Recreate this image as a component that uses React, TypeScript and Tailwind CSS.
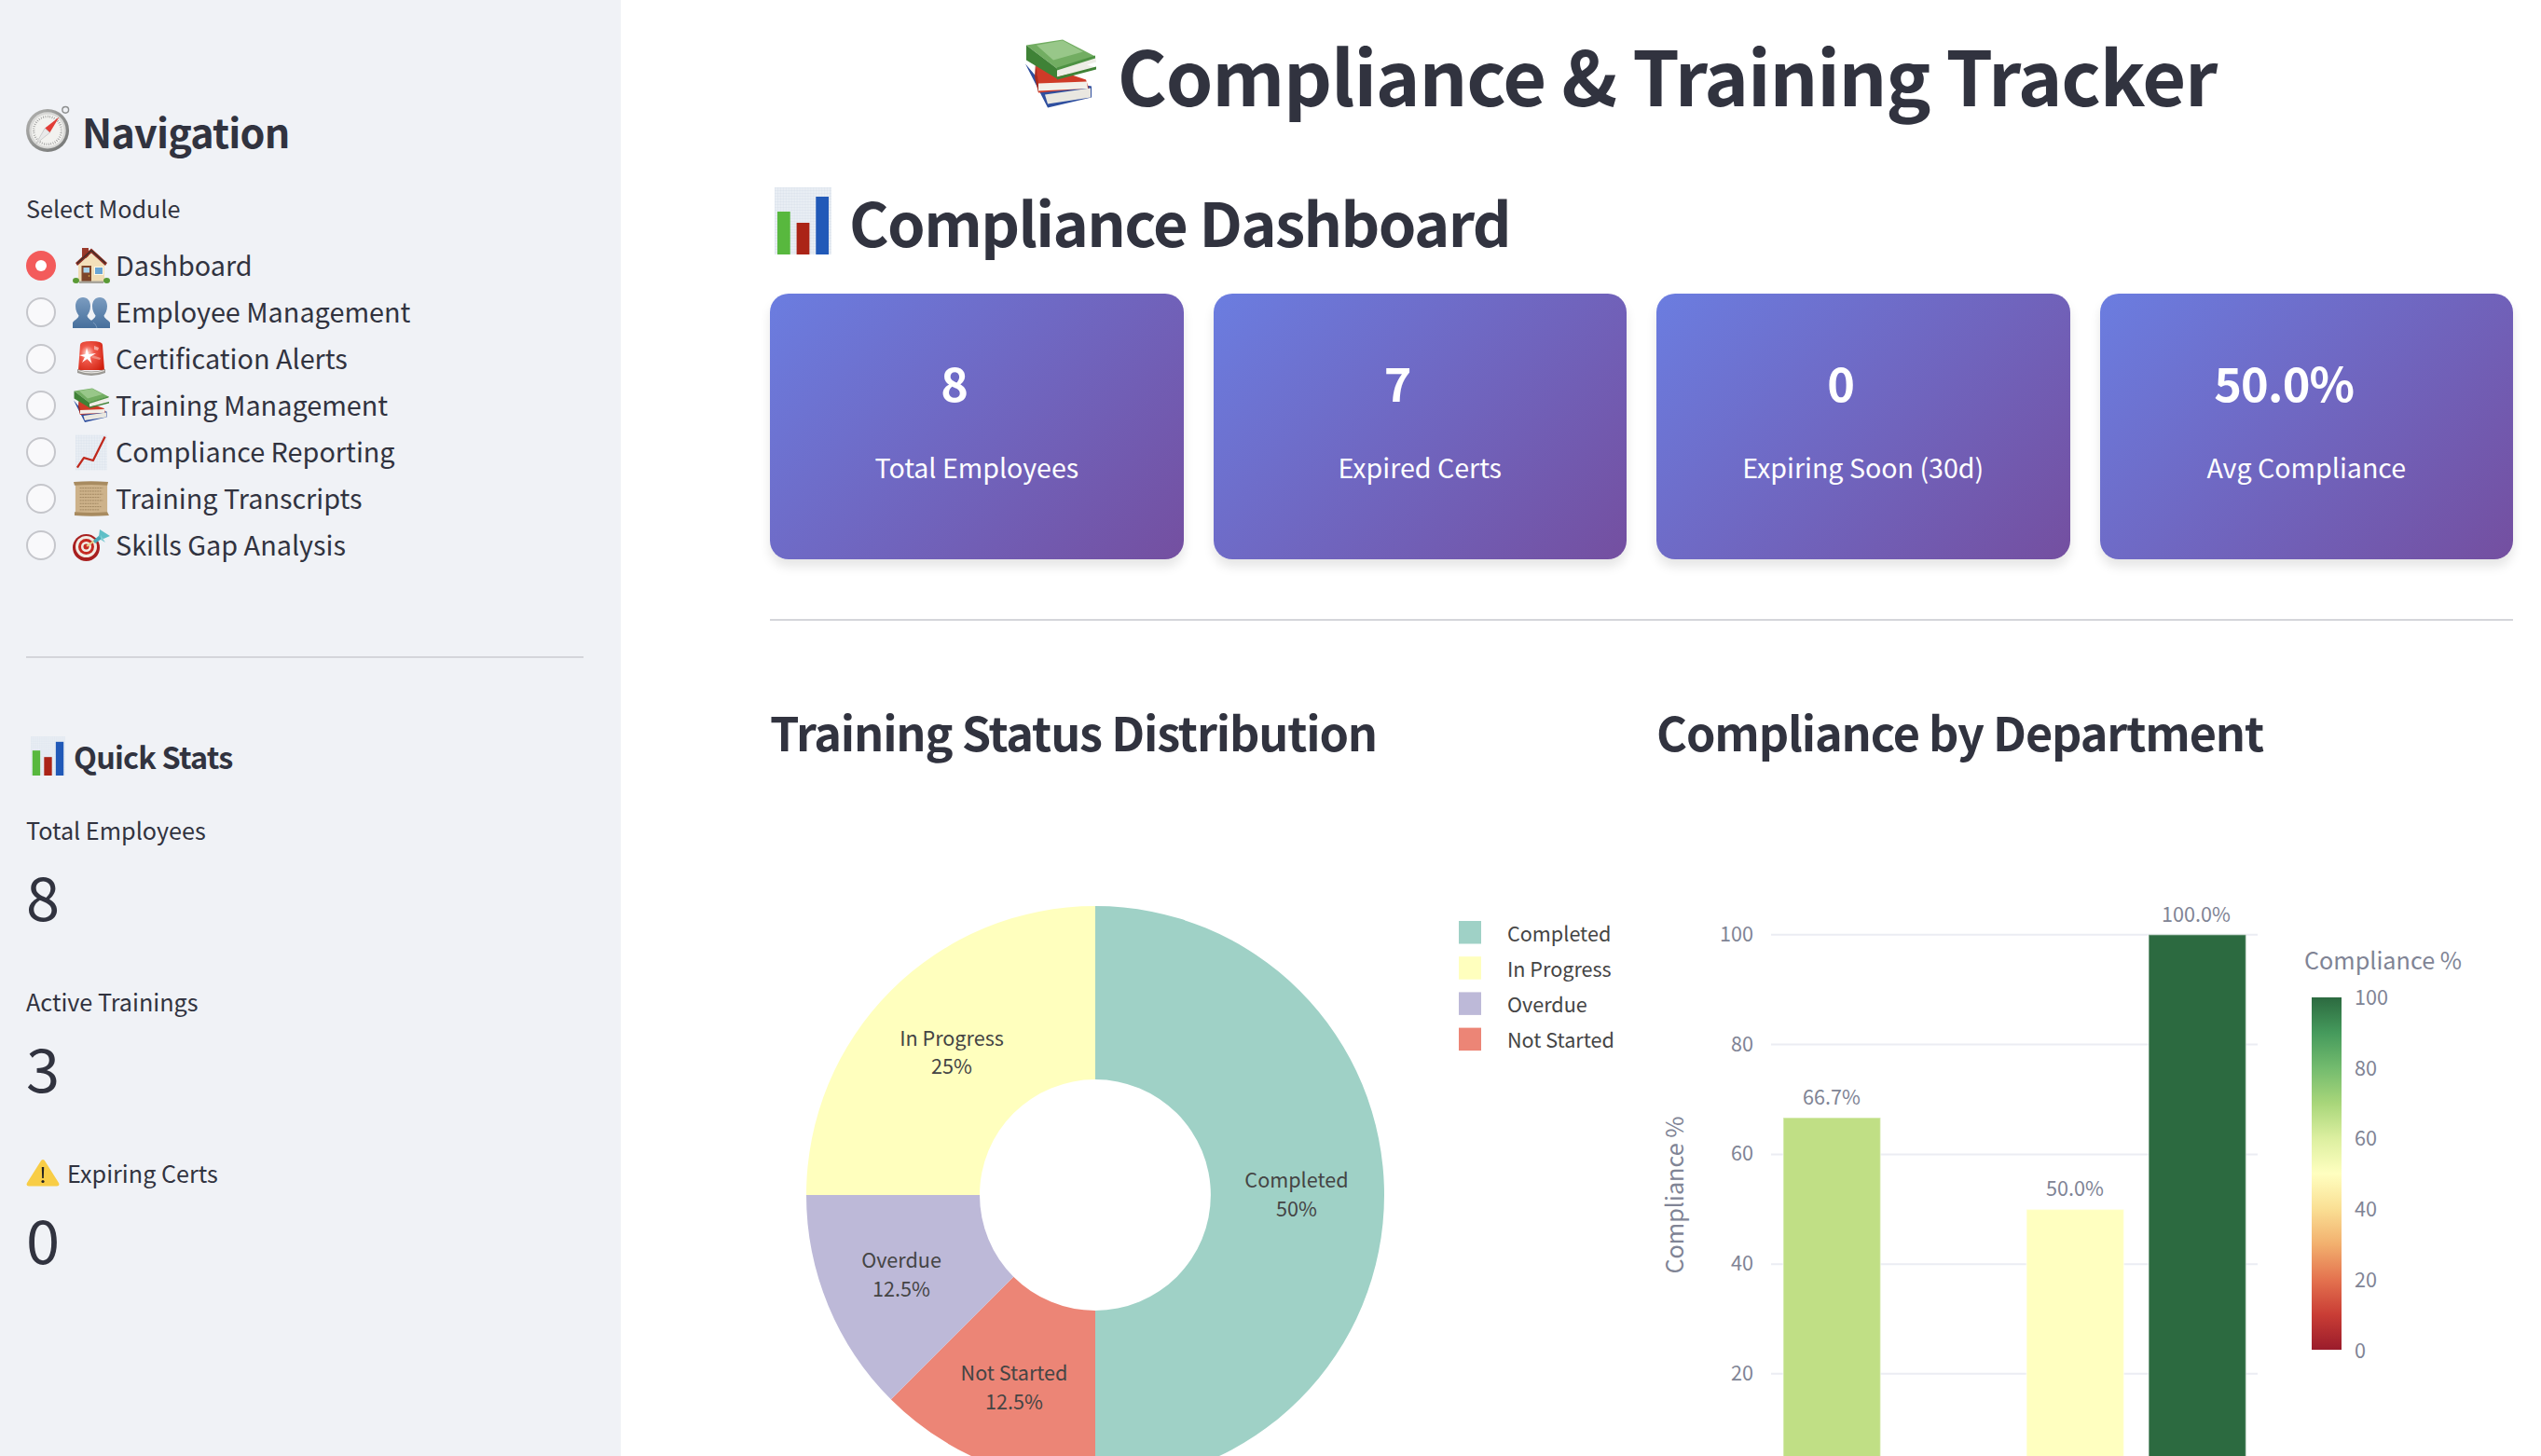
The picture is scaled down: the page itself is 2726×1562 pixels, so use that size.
import React from "react";

const Grid = ({ id }: { id: string }) => (
  <defs>
    <pattern id={id} width="3" height="3" patternUnits="userSpaceOnUse">
      <rect width="3" height="3" fill="#e9eef4" />
      <path d="M3 0H0V3" fill="none" stroke="#cdd8e5" strokeWidth="0.5" />
    </pattern>
  </defs>
);

const BarChartEmoji = ({ className }: { className: string }) => (
  <svg viewBox="0 0 62 72" className={className} preserveAspectRatio="none">
    <Grid id="g1" />
    <rect width="62" height="72" fill="url(#g1)" />
    <rect x="3" y="26" width="14" height="46" fill="#58b83e" />
    <rect x="24" y="38" width="14" height="34" fill="#ab2417" />
    <rect x="45" y="10" width="14" height="62" fill="#2159b8" />
  </svg>
);

const BooksEmoji = ({ className }: { className: string }) => (
  <svg viewBox="0 0 76 74" className={className}>
    <path d="M0 26 L24 73 L71 62 L71 50 L12 40 Z" fill="#2f4f9f" />
    <path d="M21 59 L70 52 L70 62 L24 69 Z" fill="#e9e7e0" />
    <path d="M11 25 L65 43 L68 52 L14 57 Z" fill="#cf3b28" />
    <path d="M14 47 L66 45 L67 52.500 L14 55 Z" fill="#f2f0ea" />
    <path d="M11 25 L14 47 L14 57 L10 40 Z" fill="#a92a1c" />
    <path d="M1 6 L40 0 L75 18 L34 31 Z" fill="#72ad62" />
    <path d="M12 6 L40 1 L62 13 L30 22 Z" fill="#98c789" />
    <path d="M1 6 L34 31 L34 42 L1 22 Z" fill="#3f8236" />
    <path d="M34 31 L75 18 L76 24 L66 27 L76 30 L34 40 Z" fill="#eeede6" />
    <path d="M34 30 L75 17 L75 20 L34 33 Z" fill="#4d9243" />
    <path d="M34 40 L76 29 L76 32 L34 43 Z" fill="#3f8236" />
  </svg>
);

const CompassEmoji = ({ className }: { className: string }) => (
  <svg viewBox="0 0 50 52" className={className}>
    <defs>
      <linearGradient id="rim" x1="0" y1="0" x2="1" y2="1">
        <stop offset="0" stopColor="#b5b5b3" />
        <stop offset="1" stopColor="#6f7170" />
      </linearGradient>
    </defs>
    <circle cx="44" cy="5" r="3.500" fill="none" stroke="#8d8f8f" strokeWidth="1.500" />
    <circle cx="24" cy="28" r="24" fill="url(#rim)" />
    <circle cx="24" cy="28" r="20.500" fill="#d8d8d6" />
    <circle cx="24" cy="28" r="18" fill="#f2f2ef" />
    <circle cx="24" cy="28" r="15.500" fill="none" stroke="#8e8e8e" strokeWidth="2.500" strokeDasharray="0.7 1.800" />
    <path d="M37 13 L21 25.500 L26.500 30.500 Z" fill="#e23d36" />
    <path d="M11 43 L21 25.500 L26.500 30.500 Z" fill="#e9e9e9" stroke="#a8a8a8" strokeWidth="0.5" />
  </svg>
);

const HouseEmoji = () => (
  <svg viewBox="0 0 40 38" className="h-[38px] w-[40px]">
    <rect x="10" y="0" width="7" height="11" fill="#9a3a2c" />
    <rect x="6" y="17" width="28" height="19" fill="#f0dcb4" />
    <path d="M20 6 L34 18 V24 H6 V18 Z" fill="#f3e0ba" />
    <path d="M20 0.500 L37 16 L35 19 L20 5.500 L5 19 L3 16 Z" fill="#8f2f22" />
    <path d="M20 2 L35.500 16 L35 17 L20 3.500 L5 17 L4.500 16 Z" fill="#33302d" />
    <rect x="9.500" y="19" width="10.500" height="17" fill="#7e4529" />
    <rect x="11.500" y="21" width="6.500" height="5.500" fill="#a9d3ea" />
    <circle cx="17.500" cy="30" r="0.800" fill="#e6c04f" />
    <rect x="23" y="20" width="10" height="9" fill="#fff8e6" />
    <rect x="24" y="21" width="8" height="7" fill="#6aa5d3" />
    <rect x="7" y="35.500" width="26" height="2.500" fill="#a8a59c" />
    <ellipse cx="3.500" cy="35" rx="3.500" ry="3" fill="#5a9a35" />
    <ellipse cx="36.500" cy="35" rx="3.500" ry="3" fill="#5a9a35" />
  </svg>
);

const BustsEmoji = () => (
  <svg viewBox="0 0 40 33" className="h-[33px] w-[40px]">
    <defs>
      <linearGradient id="bust" x1="0" y1="0" x2="0" y2="1">
        <stop offset="0" stopColor="#7b9cc0" />
        <stop offset="1" stopColor="#466f9c" />
      </linearGradient>
    </defs>
    <g fill="url(#bust)">
      <path d="M29 0 C34 0 37 4 37 9.500 C37 14 35 17.500 33.500 19.500 C34 23 38 24 40 27 V33 H18 V27 C20 24 24 23 24.500 19.500 C23 17.500 21 14 21 9.500 C21 4 24 0 29 0 Z" />
      <path d="M11 0 C16 0 19 4 19 9.500 C19 14 17 17.500 15.500 19.500 C16 23 20 24 22 27 V33 H0 V27 C2 24 6 23 6.500 19.500 C5 17.500 3 14 3 9.500 C3 4 6 0 11 0 Z" />
    </g>
    <path d="M22 27 C24 28 25 30 26 33" stroke="#a9c1da" strokeWidth="0.5" fill="none" />
  </svg>
);

const SirenEmoji = () => (
  <svg viewBox="0 0 30 39" className="h-[39px] w-[30px]">
    <defs>
      <radialGradient id="flare" cx="0.35" cy="0.42" r="0.75">
        <stop offset="0" stopColor="#ffe6df" />
        <stop offset="0.35" stopColor="#f0594a" />
        <stop offset="1" stopColor="#d0200f" />
      </radialGradient>
    </defs>
    <path d="M3 4 Q3 0 15 0 Q27 0 27 4 L29 31 H1 Z" fill="url(#flare)" />
    <path d="M0 30 Q15 35 30 30 V34 Q15 40 0 34 Z" fill="#9b9994" />
    <path d="M1 31 Q15 35.500 29 31 V32 Q15 37 1 32 Z" fill="#e7e5e0" />
    <path d="M10 7 L12 14 L20 13 L13.500 17 L15.500 24 L10.500 19 L5 23 L8 17 L2 15 L8.500 14 Z" fill="#fff" />
    <path d="M18 5 L23 7 L22 10 L18 9 Z" fill="#f5a79d" />
    <path d="M16 15 L25 18 L24 20 L16 18 Z" fill="#f08a7d" />
  </svg>
);

const ChartUpEmoji = () => (
  <svg viewBox="0 0 36 40" className="h-[39px] w-[34px]">
    <Grid id="g2" />
    <rect width="36" height="40" fill="url(#g2)" />
    <path d="M2 37 L9.500 26 L20 29 L33.500 2" fill="none" stroke="#c0281c" strokeWidth="2.400" strokeLinejoin="round" />
  </svg>
);

const ScrollEmoji = () => (
  <svg viewBox="0 0 40 40" className="h-[40px] w-[38px]">
    <rect x="2" y="2" width="36" height="36" fill="#cdb28a" />
    <path d="M0 1 Q20 -0.500 39 1 L38 5 Q20 3.500 1 5 Z" fill="#a88b60" />
    <path d="M1 35 Q20 36.500 38 35 L40 39 Q20 40.500 1 39 Z" fill="#a88b60" />
    <path d="M7 8H33M7 11.500H31M7 15H33M7 18.500H30M7 22H33M7 25.500H28M7 29H31M7 32.500H29" stroke="#a08660" strokeWidth="1" strokeDasharray="2 0.800" />
  </svg>
);

const DartEmoji = () => (
  <svg viewBox="0 0 40 34" className="h-[34px] w-[40px]">
    <circle cx="14.500" cy="19.500" r="14.500" fill="#a81f1f" />
    <circle cx="14.500" cy="18.500" r="11.500" fill="#f1ece4" />
    <circle cx="14.500" cy="18.500" r="8.500" fill="#c52a22" />
    <circle cx="14.500" cy="18.500" r="5.500" fill="#f1ece4" />
    <circle cx="14.500" cy="18.500" r="3" fill="#c52a22" />
    <path d="M15 18 L25 11" stroke="#e6d28a" strokeWidth="2" />
    <path d="M22 12 L29 6 L31 10 L24 15 Z" fill="#49a8b8" />
    <path d="M29 0 L40 7 L33 10 L28 8 Z" fill="#5fbfc7" />
    <path d="M30 6 L35 14 L30 11 Z" fill="#7fcdd3" />
  </svg>
);

const WarningEmoji = () => (
  <svg viewBox="0 0 36 30" className="h-[30px] w-[36px]">
    <path d="M18 1 Q19.500 1 20.500 3 L35 26 Q36.500 29.500 33 29.500 H3 Q-0.500 29.500 1 26 L15.500 3 Q16.500 1 18 1 Z" fill="#f8cd46" />
    <path d="M16.800 9 H19.200 L18.800 21 H17.200 Z" fill="#222" />
    <circle cx="18" cy="24.500" r="1.600" fill="#222" />
  </svg>
);

const modules: [string, React.ReactNode][] = [
  ["Dashboard", <HouseEmoji />],
  ["Employee Management", <BustsEmoji />],
  ["Certification Alerts", <SirenEmoji />],
  ["Training Management", <BooksEmoji className="h-[40px] w-[38px]" />],
  ["Compliance Reporting", <ChartUpEmoji />],
  ["Training Transcripts", <ScrollEmoji />],
  ["Skills Gap Analysis", <DartEmoji />],
];

const stats: [React.ReactNode, string][] = [
  ["Total Employees", "8"],
  ["Active Trainings", "3"],
  [
    <span className="flex items-center gap-[8px]">
      <WarningEmoji />
      <span>Expiring Certs</span>
    </span>,
    "0",
  ],
];

const cards = [
  ["8", "Total Employees"],
  ["7", "Expired Certs"],
  ["0", "Expiring Soon (30d)"],
  ["50.0%", "Avg Compliance"],
];

function Sidebar() {
  return (
    <aside className="h-full w-[666px] shrink-0 bg-[#f0f2f6] pl-[28px] pr-[40px] pt-[110px]">
      <div className="flex h-[60px] items-center gap-[12px] text-[43px] font-semibold leading-[60px] tracking-[-0.8px]">
        <CompassEmoji className="h-[50px] w-[48px] -translate-y-[2px]" />
        <span>Navigation</span>
      </div>
      <div className="mt-[33px] h-[40px] text-[25.2px] leading-[40px]">Select Module</div>
      <div className="mt-[17px]">
        {modules.map(([name, icon], i) => (
          <div key={name} className="flex h-[50px] items-center">
            {i === 0 ? (
              <div className="flex size-[32px] items-center justify-center rounded-full bg-[#f35b5b]">
                <div className="size-[12px] rounded-full bg-white" />
              </div>
            ) : (
              <div className="size-[32px] rounded-full border-2 border-[#c5c6cb] bg-[#f9f9fb]" />
            )}
            <div className="ml-[18px] flex w-[40px] justify-center">{icon}</div>
            <span className="ml-[6px] pb-[2px] text-[28.8px] leading-[48px]">{name}</span>
          </div>
        ))}
      </div>
      <div className="mt-[94px] h-[2px] bg-[#d4d5da]" />
      <div className="mt-[75px] flex h-[60px] items-center gap-[9px] pl-[5px] text-[32.4px] font-semibold leading-[60px] tracking-[-0.8px]">
        <BarChartEmoji className="h-[42px] w-[37px]" />
        <span>Quick Stats</span>
      </div>
      <div className="mt-[29px]">
        {stats.map(([label, value], i) => (
          <div key={i} className="mb-[54px]">
            <div className="h-[40px] text-[25.2px] leading-[40px]">{label}</div>
            <div className="mt-[10px] h-[80px] text-[65px] leading-[80px]">{value}</div>
          </div>
        ))}
      </div>
    </aside>
  );
}

function Donut() {
  const labels: [number, number, number, string, string][] = [
    [1021, 1115, 1145, "In Progress", "25%"],
    [1391, 1267, 1298, "Completed", "50%"],
    [967, 1353, 1384, "Overdue", "12.5%"],
    [1088, 1474, 1505, "Not Started", "12.5%"],
  ];
  const legend: [string, string][] = [
    ["Completed", "#9fd1c6"],
    ["In Progress", "#ffffbe"],
    ["Overdue", "#bdb9d8"],
    ["Not Started", "#ec8576"],
  ];
  return (
    <svg viewBox="826 930 919 640" className="block h-[640px] w-[919px] overflow-hidden">
      <path d="M1175 972 A310 310 0 0 1 1175 1592 L1175 1406 A124 124 0 0 0 1175 1158 Z" fill="#9fd1c6" />
      <path d="M1175 1592 A310 310 0 0 1 955.8 1501.2 L1087.3 1369.7 A124 124 0 0 0 1175 1406 Z" fill="#ec8576" />
      <path d="M955.8 1501.2 A310 310 0 0 1 865 1282 L1051 1282 A124 124 0 0 0 1087.3 1369.7 Z" fill="#bdb9d8" />
      <path d="M865 1282 A310 310 0 0 1 1175 972 L1175 1158 A124 124 0 0 0 1051 1282 Z" fill="#ffffbe" />
      {labels.map(([x, y1, y2, a, b]) => (
        <g key={a} textAnchor="middle" fontSize="21.6" fill="#444444">
          <text x={x} y={y1 + 6.5}>{a}</text>
          <text x={x} y={y2 + 6.5}>{b}</text>
        </g>
      ))}
      {legend.map(([name, color], i) => (
        <g key={name}>
          <rect x="1565" y={988 + i * 38.2} width="24" height="24.500" fill={color} />
          <text x="1617" y={1009.5 + i * 38.2} fontSize="21.6" fill="#444444">{name}</text>
        </g>
      ))}
    </svg>
  );
}

function Bars() {
  const ticks: [number, string][] = [
    [1002.7, "100"],
    [1120.6, "80"],
    [1238.4, "60"],
    [1356.3, "40"],
    [1473.8, "20"],
  ];
  const scale: [number, string][] = [
    [1071, "100"],
    [1147, "80"],
    [1222, "60"],
    [1298, "40"],
    [1374, "20"],
    [1450, "0"],
  ];
  const bars: [number, number, string, string, number, number][] = [
    [1913, 1199, "#c0df85", "66.7%", 1965, 1178],
    [2174, 1297.4, "#ffffc0", "50.0%", 2226, 1276],
    [2305, 1002.7, "#2c6a40", "100.0%", 2356, 982],
  ];
  return (
    <svg viewBox="1777 930 919 640" className="block h-[640px] w-[919px] overflow-hidden">
      <defs>
        <linearGradient id="rdylgn" x1="0" y1="1" x2="0" y2="0">
          <stop offset="0" stopColor="#9a1c2b" />
          <stop offset="0.1" stopColor="#c93d35" />
          <stop offset="0.2" stopColor="#e4734f" />
          <stop offset="0.3" stopColor="#f2b06e" />
          <stop offset="0.4" stopColor="#fadf94" />
          <stop offset="0.5" stopColor="#ffffc0" />
          <stop offset="0.6" stopColor="#dcefa0" />
          <stop offset="0.7" stopColor="#a8d67a" />
          <stop offset="0.8" stopColor="#73bb6e" />
          <stop offset="0.9" stopColor="#459a5c" />
          <stop offset="1" stopColor="#2c6a40" />
        </linearGradient>
      </defs>
      {ticks.map(([y, t]) => (
        <g key={t}>
          <line x1="1900" x2="2422" y1={y} y2={y} stroke="#ebedf3" strokeWidth="2" />
          <text x="1881" y={y + 7} textAnchor="end" fontSize="21.6" fill="#808495">{t}</text>
        </g>
      ))}
      {bars.map(([x, y, color, label, lx, ly]) => (
        <g key={label}>
          <rect x={x} y={y} width="104.500" height={1591 - y} fill={color} stroke="#ffffff" strokeOpacity="0.45" strokeWidth="1.500" />
          <text x={lx} y={ly + 7} textAnchor="middle" fontSize="21.6" fill="#808495">{label}</text>
        </g>
      ))}
      <text transform="translate(1806 1282) rotate(-90)" textAnchor="middle" fontSize="25.2" fill="#808495">Compliance %</text>
      <text x="2472" y="1040" fontSize="25.2" fill="#808495">Compliance %</text>
      <rect x="2480" y="1070" width="32" height="378" fill="url(#rdylgn)" />
      {scale.map(([y, t]) => (
        <text key={t} x="2526" y={y + 7} fontSize="21.6" fill="#808495">{t}</text>
      ))}
    </svg>
  );
}

export default function App() {
  return (
    <div className="flex h-[1562px] w-[2726px] overflow-hidden bg-white font-['Noto_Sans_CJK_SC','Noto_Sans',sans-serif] text-[#31333f]">
      <Sidebar />
      <main className="h-full w-[2060px] pl-[160px] pr-[30px] pt-[29px]">
        <div className="flex h-[100px] items-center justify-center gap-[23px] pr-[44px] text-[81px] font-bold leading-[100px] tracking-[-1.2px]">
          <BooksEmoji className="h-[75px] w-[76px]" />
          <span>Compliance &amp; Training Tracker</span>
        </div>
        <div className="mt-[63px] flex h-[90px] items-center gap-[19px] pl-[5px] text-[65px] font-semibold leading-[90px] tracking-[-1.6px]">
          <BarChartEmoji className="h-[72px] w-[61px]" />
          <span>Compliance Dashboard</span>
        </div>
        <div className="mt-[33px] grid grid-cols-4 gap-[32px]">
          {cards.map(([value, label]) => (
            <div
              key={label}
              className="h-[285px] rounded-[20px] bg-[linear-gradient(135deg,#6b7de0_0%,#744fa0_100%)] pt-[60px] text-center text-white shadow-[0_8px_12px_rgba(0,0,0,0.1)]"
            >
              <div className="h-[70px] pr-[48px] text-[50.4px] font-semibold leading-[70px] tracking-[-0.8px]">{value}</div>
              <div className="mt-[34px] h-[44px] text-[28.6px] leading-[44px]">{label}</div>
            </div>
          ))}
        </div>
        <div className="mt-[64px] h-[2px] bg-[#d4d5da]" />
        <div className="mt-[84px] grid grid-cols-2 gap-[32px]">
          <div>
            <h3 className="h-[70px] text-[50.4px] font-semibold leading-[70px] tracking-[-1.14px]">Training Status Distribution</h3>
            <div className="mt-[110px]">
              <Donut />
            </div>
          </div>
          <div>
            <h3 className="h-[70px] text-[50.4px] font-semibold leading-[70px] tracking-[-1.14px]">Compliance by Department</h3>
            <div className="mt-[110px]">
              <Bars />
            </div>
          </div>
        </div>
      </main>
    </div>
  );
}
